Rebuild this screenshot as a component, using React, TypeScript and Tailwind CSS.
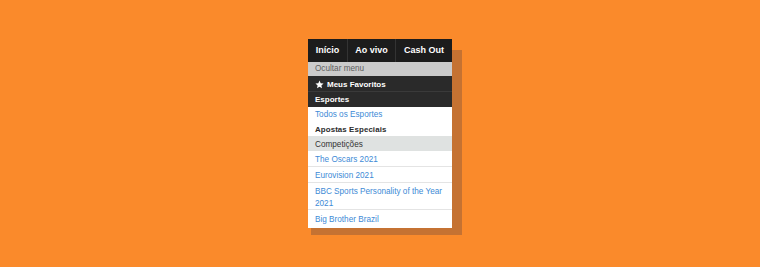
import React from "react";

const Star = () => (
  <svg width="9" height="9" viewBox="0 0 24 24" className="shrink-0">
    <path
      fill="#ffffff"
      d="M12 1.5l3.1 7.1 7.7.7-5.8 5.1 1.7 7.6L12 18l-6.7 4 1.7-7.6L1.2 9.3l7.7-.7z"
    />
  </svg>
);

export default function App() {
  const font = { fontFamily: '"Liberation Sans", Arial, sans-serif' };
  return (
    <div
      className="w-full h-[267px] bg-[#fa8a2b] flex items-center justify-center"
      style={font}
    >
      <div className="relative w-[144px]">
        <div className="absolute left-[3px] top-[11px] -right-[10px] -bottom-[7px] bg-[#c57232]" />
        <div className="relative flex flex-col bg-white">
          <div className="flex h-[23px] bg-[#1c1c1c] text-white font-bold text-[9px]">
            <div className="w-[39px] flex items-center justify-center">Início</div>
            <div className="w-[48px] flex items-center justify-center border-l border-[#333333]">Ao vivo</div>
            <div className="w-[57px] flex items-center justify-center border-l border-[#333333]">Cash Out</div>
          </div>
          <div className="h-[14px] flex items-center pl-[7px] bg-[#cbcbcb] text-[#5e5e5e] text-[8.2px]">
            Ocultar menu
          </div>
          <div className="h-[16px] flex items-center gap-[3px] pl-[7px] pt-[2px] bg-[#2a2a2a] text-white font-bold text-[8px] border-b border-[#3a3a3a]">
            <Star />
            <span>Meus Favoritos</span>
          </div>
          <div className="h-[15px] flex items-center pl-[7px] bg-[#2a2a2a] text-white font-bold text-[8px]">
            Esportes
          </div>
          <div className="h-[14px] flex items-center pl-[7px] pt-[2px] text-[#3d8ad6] text-[8.2px]">
            Todos os Esportes
          </div>
          <div className="h-[15px] flex items-center pl-[7px] pt-[2px] text-[#2b2b2b] font-bold text-[7.9px] tracking-[0.1px]">
            Apostas Especiais
          </div>
          <div className="h-[15px] flex items-center pl-[7px] pt-[3px] bg-[#dfe2e1] text-[#333333] text-[8.2px]">
            Competições
          </div>
          <div className="h-[16px] flex items-center pl-[7px] pt-[4px] text-[#3d8ad6] text-[8.2px] border-b border-[#e4e4e4]">
            The Oscars 2021
          </div>
          <div className="h-[16px] flex items-center pl-[7px] pt-[4px] text-[#3d8ad6] text-[8.2px] border-b border-[#e4e4e4]">
            Eurovision 2021
          </div>
          <div className="h-[27px] flex items-center pl-[7px] pt-[3px] text-[#3d8ad6] text-[8.2px] leading-[12px] border-b border-[#e4e4e4] whitespace-nowrap">
            <span>
              BBC Sports Personality of the Year
              <br />
              2021
            </span>
          </div>
          <div className="h-[18px] flex items-center pl-[7px] pt-[3px] text-[#3d8ad6] text-[8.2px]">
            Big Brother Brazil
          </div>
        </div>
      </div>
    </div>
  );
}
